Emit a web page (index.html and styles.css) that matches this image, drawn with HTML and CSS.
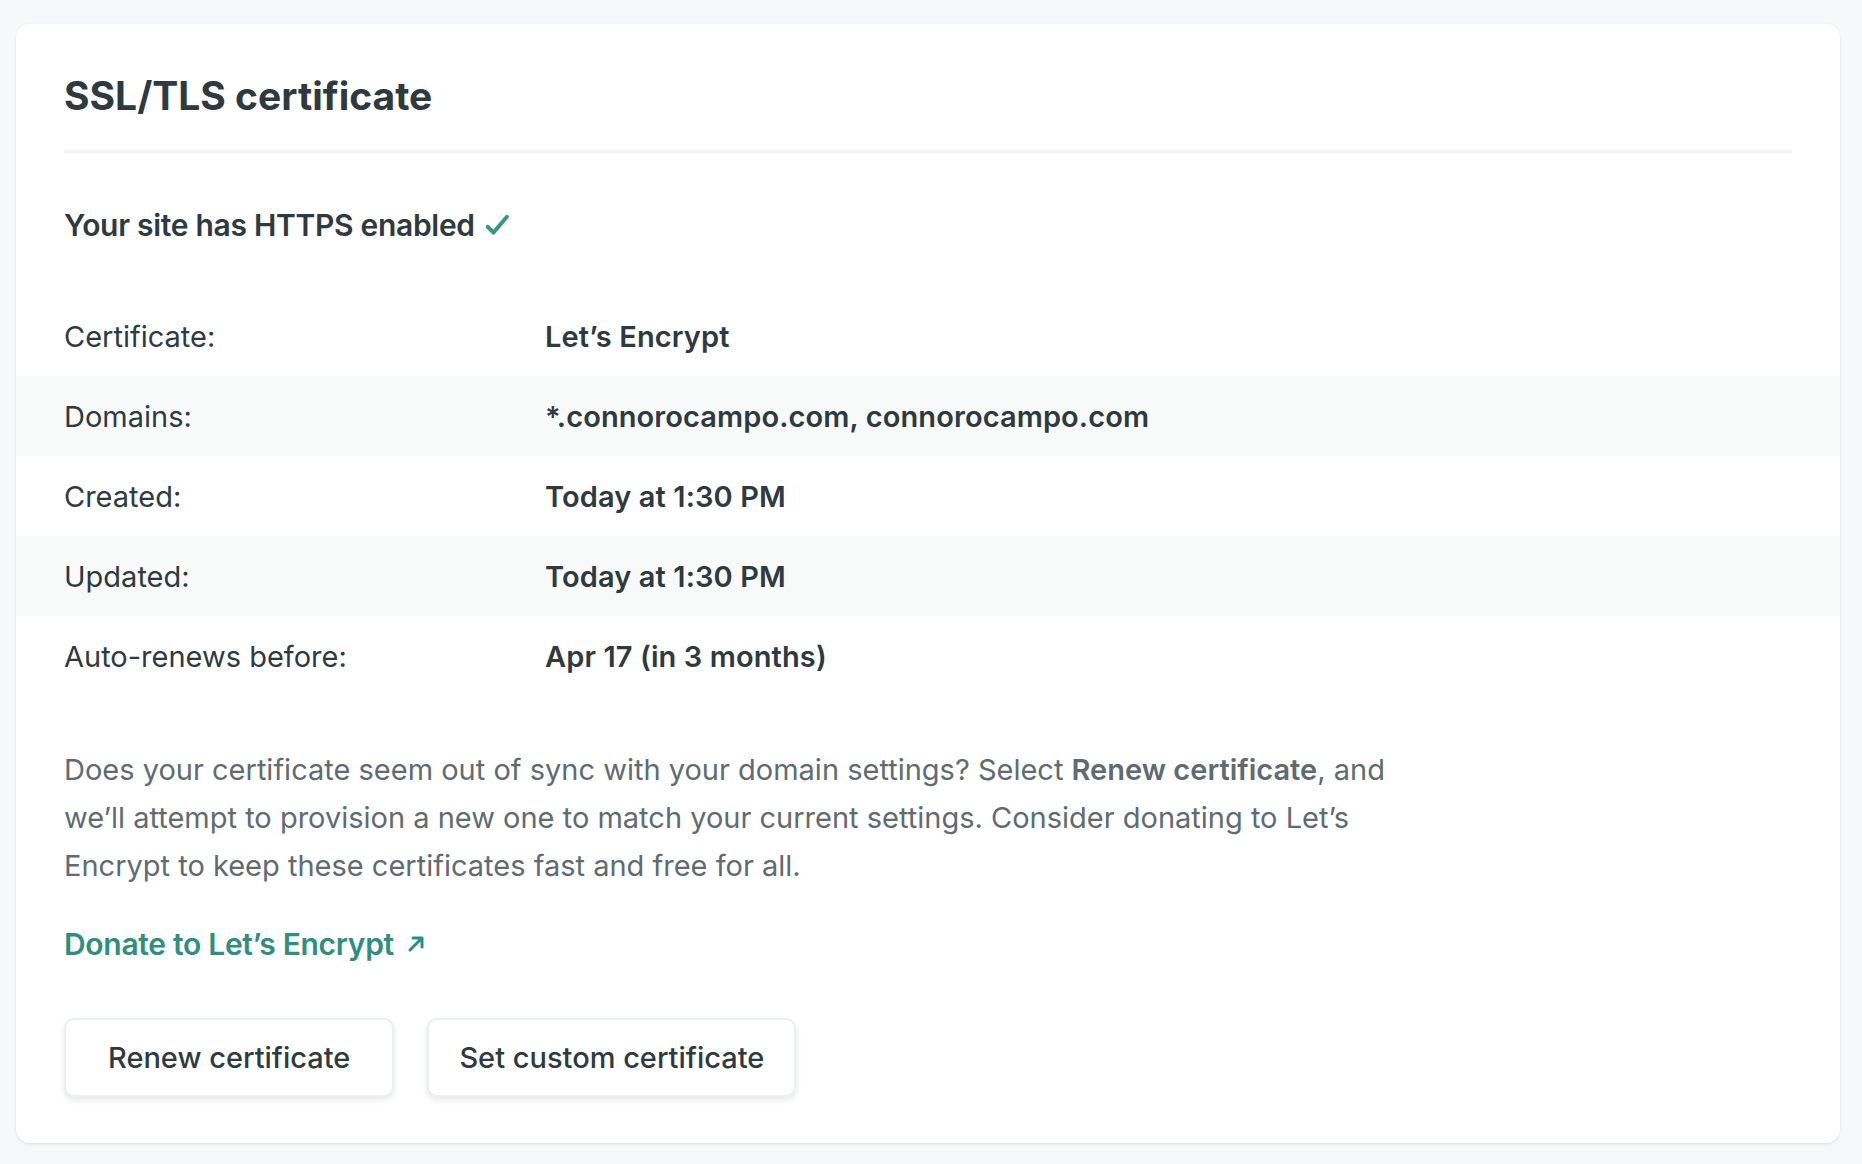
FILE: index.html
```html
<!DOCTYPE html>
<html lang="en">
<head>
<meta charset="utf-8">
<title>SSL/TLS certificate</title>
<link rel="stylesheet" href="styles.css">
</head>
<body>
<section class="card">
  <h2 class="card-title">SSL/TLS certificate</h2>
  <p class="status">Your site has HTTPS enabled <svg class="check" viewBox="0 0 24 24" width="28" height="28"><path d="M4 13.5l5 5L20.5 5" fill="none" stroke="currentColor" stroke-width="3.4" stroke-linecap="round" stroke-linejoin="round"/></svg></p>
  <dl class="details">
    <div class="row"><dt>Certificate:</dt><dd>Let’s Encrypt</dd></div>
    <div class="row alt"><dt>Domains:</dt><dd>*.connorocampo.com, connorocampo.com</dd></div>
    <div class="row"><dt>Created:</dt><dd>Today at 1:30 PM</dd></div>
    <div class="row alt"><dt>Updated:</dt><dd>Today at 1:30 PM</dd></div>
    <div class="row"><dt>Auto-renews before:</dt><dd>Apr 17 (in 3 months)</dd></div>
  </dl>
  <p class="note">Does your certificate seem out of sync with your domain settings? Select <strong>Renew certificate</strong>, and we’ll attempt to provision a new one to match your current settings. Consider donating to Let’s Encrypt to keep these certificates fast and free for all.</p>
  <a class="donate" href="#">Donate to Let’s Encrypt <svg class="arrow" viewBox="0 0 20 20" width="24" height="24"><path d="M5 15L15 5M7.5 5H15v7.5" fill="none" stroke="currentColor" stroke-width="2.5" stroke-linecap="round" stroke-linejoin="round"/></svg></a>
  <div class="actions">
    <button class="btn btn-renew" type="button">Renew certificate</button>
    <button class="btn btn-custom" type="button">Set custom certificate</button>
  </div>
</section>
</body>
</html>
```
FILE: styles.css
```css
html, body {
  margin: 0;
  padding: 0;
}
body {
  background: #f6f9f9;
  font-family: Inter, "Noto Sans", "Liberation Sans", sans-serif;
  color: #2e3a40;
  padding: 24px 22px 21px 16px;
}
.card {
  background: #fff;
  border-radius: 14px;
  box-shadow: 0 1px 3px rgba(14, 30, 37, 0.12);
  padding: 46px 48px 48px;
  box-sizing: border-box;
  height: 1119px;
}
.card-title {
  margin: 0;
  font-size: 39px;
  font-weight: 700;
  line-height: 52px;
  padding-bottom: 28px;
  border-bottom: 3px solid #f2f4f4;
}
.status {
  margin: 0;
  padding-top: 50px;
  font-size: 30px;
  font-weight: 600;
  line-height: 44px;
  letter-spacing: -0.3px;
  display: flex;
  align-items: center;
  gap: 8px;
}
.check {
  color: #3a9587;
}
.details {
  margin: 49px -48px 0;
}
.row {
  display: flex;
  align-items: center;
  height: 80px;
  padding: 0 48px;
  font-size: 29px;
}
.row.alt {
  background: #f8fafa;
}
.row dt {
  width: 481px;
  flex: none;
}
.row dd {
  margin: 0;
  font-weight: 600;
  letter-spacing: 0.1px;
}
.note {
  margin: 50px 0 0;
  max-width: 1340px;
  font-size: 29px;
  line-height: 48px;
  color: #5f6b71;
}
.note strong {
  font-weight: 600;
}
.donate {
  display: inline-flex;
  align-items: center;
  gap: 10px;
  margin-top: 34px;
  color: #2f8e80;
  font-size: 30px;
  font-weight: 600;
  line-height: 40px;
  text-decoration: none;
  letter-spacing: -0.3px;
}
.actions {
  display: flex;
  gap: 33px;
  margin-top: 54px;
}
.btn {
  font-family: inherit;
  font-size: 29px;
  font-weight: 500;
  color: #2e3a40;
  background: #fff;
  border: 2px solid #eceff0;
  border-radius: 10px;
  height: 79px;
  padding: 0 42px;
  box-shadow: 0 3px 6px rgba(14, 30, 37, 0.1);
}
.btn-custom {
  padding: 0 30px;
}
```
